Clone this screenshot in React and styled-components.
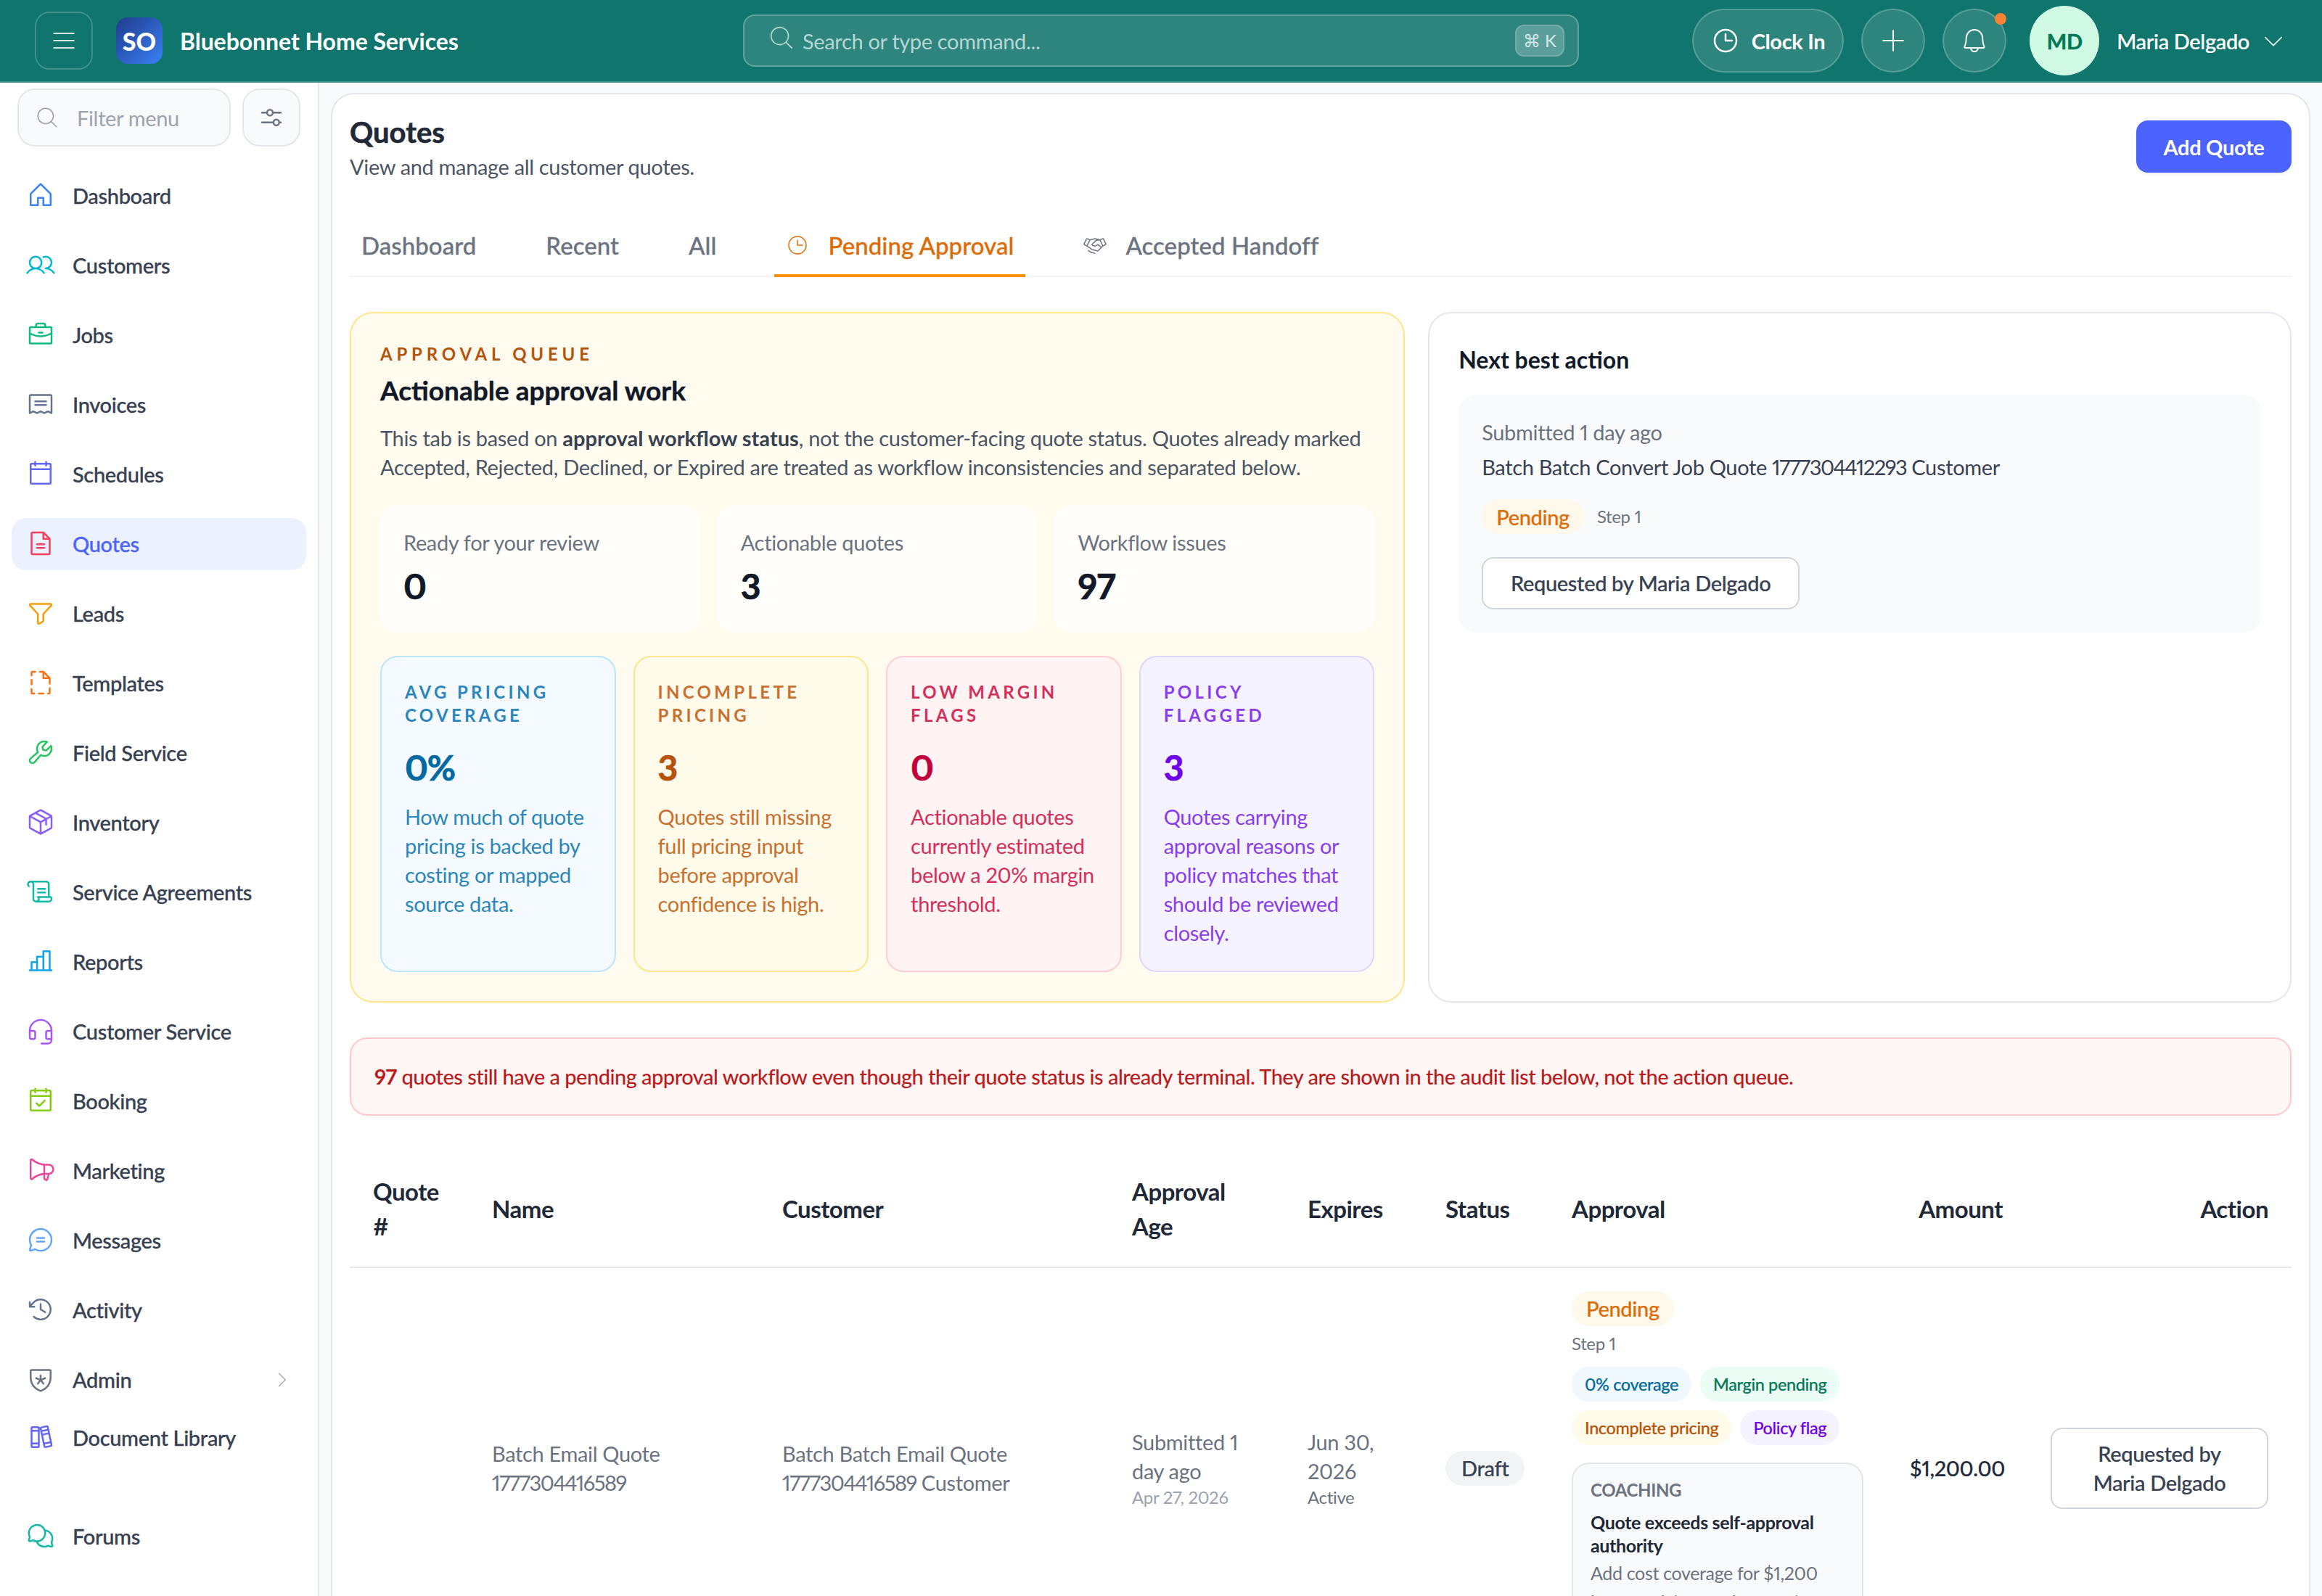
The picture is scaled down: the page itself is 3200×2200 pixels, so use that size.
import React from "react";
import styled, { createGlobalStyle } from "styled-components";
import {
  PiListLight, PiMagnifyingGlassLight, PiClock, PiClockLight, PiPlusLight, PiBellLight, PiCaretDownLight, PiCaretRightLight,
  PiHouse, PiUsers, PiBriefcase, PiReceipt, PiCalendarBlank, PiFileText, PiFunnel, PiFileDashed, PiWrench, PiPackage,
  PiScroll, PiChartBar, PiHeadset, PiCalendarCheck, PiMegaphone, PiChatCircleText, PiClockCounterClockwise, PiShieldStar,
  PiBooks, PiChatsCircle, PiHandshakeLight,
} from "react-icons/pi";

const Global = createGlobalStyle`
  html, body { margin: 0; padding: 0; background: #fff; }
  * { box-sizing: border-box; }
`;

const Shell = styled.div`
  zoom: 2;
  width: 1600px;
  height: 1100px;
  overflow: hidden;
  display: flex;
  flex-direction: column;
  font-family: "Lato", "Noto Sans", sans-serif;
  font-variant-numeric: proportional-nums;
  letter-spacing: -.17px;
  color: #374151;
  background: #f9fafb;
`;

const Header = styled.header`
  height: 57px;
  flex: none;
  display: flex;
  align-items: center;
  padding: 0 24.5px 0 24px;
  background: #10756d;
  border-bottom: 1px solid #3f9189;
  color: #fff;
`;
const MenuBtn = styled.div`
  width: 40px; height: 40px;
  border-radius: 10px;
  border: 1px solid rgba(255,255,255,.2);
  display: flex; align-items: center; justify-content: center;
  color: #d5e8e6; font-size: 20px;
`;
const Logo = styled.div`
  width: 32px; height: 32px; margin-left: 16px;
  border-radius: 8px;
  background: linear-gradient(135deg, #1e3a8a, #3b82f6);
  display: flex; align-items: center; justify-content: center;
  font-weight: 900; font-size: 17px; letter-spacing: 0;
`;
const Brand = styled.div`
  margin-left: 12px; width: 200px;
  font-size: 16px; font-weight: 700; white-space: nowrap; letter-spacing: -.03px;
`;
const SearchBox = styled.div`
  margin-left: 188px;
  width: 576px; height: 36px;
  border-radius: 8px;
  background: rgba(255,255,255,.12);
  border: 1px solid rgba(255,255,255,.25);
  display: flex; align-items: center;
  padding: 0 9px 0 16px; gap: 5px;
  color: #b5d6d3; font-size: 14.5px;
  svg { font-size: 19px; margin-top: -4px; }
`;
const SearchText = styled.span` flex: 1; `;
const Kbd = styled.span`
  width: 34px; height: 22px; border-radius: 6px;
  background: rgba(255,255,255,.22);
  border: 1px solid rgba(255,255,255,.15);
  display: flex; align-items: center; justify-content: center;
  font-size: 12px; color: #d6e8e6;
`;
const Actions = styled.div`
  margin-left: auto;
  display: flex; align-items: center;
`;
const Pill = styled.div`
  height: 44px; padding: 0 12px;
  border-radius: 22px;
  background: rgba(255,255,255,.12);
  border: 1px solid rgba(255,255,255,.2);
  display: flex; align-items: center; gap: 8px;
  font-size: 14.5px; font-weight: 700;
  svg { font-size: 20px; }
`;
const Round = styled.div`
  position: relative;
  width: 44px; height: 44px;
  margin-left: ${p => p.$ml}px;
  border-radius: 50%;
  background: rgba(255,255,255,.12);
  border: 1px solid rgba(255,255,255,.2);
  display: flex; align-items: center; justify-content: center;
  font-size: 20px;
`;
const Dot = styled.span`
  position: absolute; top: 2px; right: -1px;
  width: 8px; height: 8px; border-radius: 50%;
  background: #fb8232;
`;
const Avatar = styled.div`
  width: 48px; height: 48px; margin-left: 16px;
  border-radius: 50%;
  background: #d1fae5; color: #047857;
  display: flex; align-items: center; justify-content: center;
  font-weight: 700; font-size: 14.5px;
  -webkit-text-stroke: .25px currentColor;
`;
const UserName = styled.div`
  margin-left: 12px; font-size: 14.5px; font-weight: 500; white-space: nowrap;
  -webkit-text-stroke: .12px currentColor;
`;
const Caret = styled.span`
  margin-left: 7.5px; display: flex; font-size: 18px;
`;

const Body = styled.div`
  flex: 1; min-height: 0; display: flex;
`;
const Sidebar = styled.aside`
  width: 220px; flex: none;
  background: #fff;
  border-right: 1px solid #e5e7eb;
  padding: 4px 12px 0;
`;
const FilterRow = styled.div`
  display: flex; gap: 8px;
`;
const FilterInput = styled.div`
  flex: 1; height: 40px;
  border-radius: 12px;
  border: 1px solid #e5e7eb;
  background: #f9fafb;
  display: flex; align-items: center; gap: 12px;
  padding-left: 11px;
  color: #9ca3af; font-size: 14.5px;
  svg { font-size: 17px; }
`;
const FilterBtn = styled.div`
  width: 40px; height: 40px; flex: none;
  border-radius: 12px;
  border: 1px solid #e5e7eb;
  background: #f9fafb;
  display: flex; align-items: center; justify-content: center;
  color: #6b7280;
`;
const Nav = styled.nav`
  margin: 16px 0 0 -4px;
  display: flex; flex-direction: column; gap: 12px;
`;
const NavStack = styled.div`
  display: flex; flex-direction: column; gap: 4px;
`;
const NavItem = styled.div`
  height: 36px;
  margin-top: ${p => p.$top || 0}px;
  margin-right: -4px;
  padding: 0 10px;
  border-radius: 10px;
  display: flex; align-items: center; gap: 12px;
  font-size: 14.5px; font-weight: 500; white-space: nowrap;
  -webkit-text-stroke: .15px currentColor;
  color: ${p => (p.$active ? "#4c63ff" : "#374151")};
  background: ${p => (p.$active ? "#ebf1fe" : "transparent")};
  > svg:first-child { font-size: 20px; flex: none; margin-top: -1px; color: ${p => p.$icon}; }
`;
const NavLabel = styled.span` padding-bottom: 1px; `;
const NavCaret = styled.span`
  margin-left: auto; display: flex; font-size: 14px; color: #9ca3af;
`;

const Main = styled.main`
  flex: 1; min-width: 0; padding: 7px 8px 0 8px; overflow: hidden;
`;
const Card = styled.section`
  background: #fff;
  border: 1px solid #e5e7eb;
  border-radius: 16px 16px 0 0;
  padding: 12px 12px 0;
  min-height: 1040px;
`;
const TitleRow = styled.div`
  display: flex; align-items: center; justify-content: space-between;
`;
const Title = styled.h1`
  margin: 0; font-size: 20px; line-height: 28px; font-weight: 700; color: #1f2937; letter-spacing: 0;
  -webkit-text-stroke: .3px currentColor;
`;
const Sub = styled.p`
  margin: 0; font-size: 14.5px; line-height: 20px; color: #4b5563;
`;
const PrimaryBtn = styled.div`
  width: 107px; height: 36px; border-radius: 8px;
  background: #4c63ff; color: #fff;
  display: flex; align-items: center; justify-content: center;
  font-size: 14.5px; font-weight: 700;
  box-shadow: 0 1px 2px rgba(0,0,0,.08);
`;
const Tabs = styled.div`
  margin-top: 24px;
  display: flex; gap: 32px;
  height: 42px;
  border-bottom: 1px solid #f3f4f6;
`;
const Tab = styled.div`
  height: 42px; padding: 0 8px;
  display: flex; align-items: center; gap: 13px;
  border-bottom: 2px solid ${p => (p.$active ? "#f78f06" : "transparent")};
  font-size: 16.5px; font-weight: 500; white-space: nowrap; letter-spacing: .03px;
  -webkit-text-stroke: .15px currentColor;
  color: ${p => (p.$active ? "#dd6b06" : "#6b7280")};
  svg { font-size: 16px; }
`;

const Panels = styled.div`
  margin-top: 24px;
  display: grid; grid-template-columns: 11fr 9fr; gap: 16px;
`;
const Queue = styled.div`
  border: 1px solid #fde68a; border-radius: 16px;
  background: #fffbef;
  padding: 20px;
`;
const Eyebrow = styled.div`
  font-size: 12px; line-height: 16px; font-weight: 700;
  letter-spacing: 2.9px; color: #b45309;
`;
const Heading = styled.h2`
  margin: 3px 0 0; font-size: 18.5px; line-height: 28px; font-weight: 700; color: #111827; letter-spacing: 0;
  -webkit-text-stroke: .2px currentColor;
`;
const Para = styled.p`
  margin: 9px 0 0; font-size: 14.5px; line-height: 20px; color: #4b5563; letter-spacing: -.15px;
  b { font-weight: 700; color: #374151; letter-spacing: 0; }
`;
const Stats = styled.div`
  margin-top: 16px;
  display: grid; grid-template-columns: repeat(3, 1fr); gap: 12px;
`;
const Stat = styled.div`
  height: 88px; padding: 16px;
  border-radius: 12px;
  background: rgba(255,255,255,.75);
`;
const StatLabel = styled.div`
  font-size: 14.5px; line-height: 20px; color: #6b7280;
`;
const StatValue = styled.div`
  margin-top: 4px; font-size: 24px; line-height: 32px; font-weight: 700; color: #111827;
  -webkit-text-stroke: .35px currentColor;
`;
const Metrics = styled.div`
  margin-top: 16px;
  display: grid; grid-template-columns: repeat(4, 1fr); gap: 12px;
`;
const Metric = styled.div`
  padding: 16px; border-radius: 12px;
  border: 1px solid ${p => p.$line};
  background: ${p => p.$bg};
  color: ${p => p.$text};
`;
const MetricLabel = styled.div`
  font-size: 12px; line-height: 16px; font-weight: 700; letter-spacing: .18em;
`;
const MetricValue = styled.div`
  margin-top: 12px; font-size: 24px; line-height: 32px; font-weight: 700; letter-spacing: -.6px;
  -webkit-text-stroke: .35px currentColor;
  color: ${p => p.$color};
`;
const MetricDesc = styled.div`
  margin-top: 8px; font-size: 14.5px; line-height: 20px;
`;

const NextPanel = styled.div`
  border: 1px solid #e5e7eb; border-radius: 16px;
  background: #fff; padding: 20px;
`;
const NextTitle = styled.h3`
  margin: 0; font-size: 16px; line-height: 24px; font-weight: 700; color: #111827; letter-spacing: 0;
`;
const NextBox = styled.div`
  margin-top: 12px; padding: 16px; border-radius: 12px; background: #f9fafb;
`;
const Muted = styled.div`
  font-size: 14.5px; line-height: 20px; color: #6b7280;
`;
const Dark = styled.div`
  margin-top: 4px; font-size: 14.5px; line-height: 20px; color: #374151;
`;
const Digits = styled.span` letter-spacing: -.75px; `;
const BadgeRow = styled.div`
  margin-top: ${p => p.$mt}px; display: flex; align-items: center; gap: 9px;
`;
const Badge = styled.span`
  display: inline-flex; align-items: center; height: 24px; padding: 0 ${p => p.$pad || 10}px;
  border-radius: 12px; white-space: nowrap;
  font-size: ${p => p.$size || 14.5}px; font-weight: 500;
  -webkit-text-stroke: .1px currentColor;
  background: ${p => p.$bg}; color: ${p => p.$color};
`;
const Small = styled.div`
  margin-top: ${p => p.$mt || 0}px;
  font-size: 12px; line-height: 16px; color: ${p => p.$color || "#6b7280"};
`;
const OutlineBtn = styled.div`
  margin-top: ${p => p.$mt || 0}px;
  display: inline-flex; align-items: center; justify-content: center; text-align: center;
  padding: 0 ${p => p.$pad || 0}px;
  height: ${p => p.$h || 36}px; width: ${p => p.$w}px;
  border-radius: 8px; background: #fff; border: 1px solid #d1d5db;
  font-size: 14.5px; line-height: 20px; font-weight: 500; color: #374151;
  -webkit-text-stroke: .12px currentColor;
`;
const Warning = styled.div`
  margin-top: 24px; padding: 16px;
  border: 1px solid #fecaca; border-radius: 12px;
  background: #fef5f5;
  font-size: 14.5px; line-height: 20px; font-weight: 500; color: #b91c1c; letter-spacing: -.26px;
`;

const Table = styled.table`
  margin-top: 24px; width: 100%;
  table-layout: fixed; border-collapse: collapse;
`;
const Col = styled.col`
  width: ${p => p.$w}px;
`;
const Th = styled.th`
  padding: 16px;
  font-size: 16.5px; line-height: 24px; font-weight: 700; color: #1f2937; letter-spacing: -.25px;
  text-align: ${p => p.$align || "left"};
  border-bottom: 1px solid #e5e7eb;
  vertical-align: middle;
`;
const Row = styled.tr` height: 276px; `;
const Td = styled.td`
  padding: 16px;
  font-size: 14.5px; line-height: 20px; color: #6b7280;
  text-align: ${p => p.$align || "left"};
  vertical-align: middle;
`;
const Amount = styled.span` color: #1f2937; font-weight: 500; -webkit-text-stroke: .12px currentColor; `;
const Tags = styled.div`
  margin-top: 8px; display: flex; flex-wrap: wrap; gap: 6px;
`;
const Coaching = styled.div`
  margin-top: 12px; padding: 10px 12px 0; height: 126px; overflow: hidden;
  border: 1px solid #e5e7eb; border-radius: 12px; background: #f9fafb;
`;
const CoachLabel = styled.div`
  font-size: 12px; line-height: 16px; font-weight: 700; color: #6b7280;
`;
const CoachTitle = styled.div`
  margin-top: 6px; font-size: 12.5px; line-height: 16px; font-weight: 700; color: #1f2937;
`;
const CoachText = styled.div`
  margin-top: 1px; font-size: 12.5px; line-height: 20px; color: #6b7280;
`;

const SlidersIcon = () => (
  <svg width="16" height="16" viewBox="0 0 16 16" fill="none" stroke="currentColor" strokeWidth="1.2" strokeLinecap="round">
    <path d="M1.5 4.6h3.6M9 4.6h5.5M1.5 11.4h8M13.4 11.4h1.1" />
    <circle cx="7" cy="4.6" r="2" />
    <circle cx="11.4" cy="11.4" r="2" />
  </svg>
);

const nav = [
  ["Dashboard", PiHouse, "#3b82f6"], ["Customers", PiUsers, "#06b6d4"], ["Jobs", PiBriefcase, "#10b981"],
  ["Invoices", PiReceipt, "#64748b"], ["Schedules", PiCalendarBlank, "#6366f1"], ["Quotes", PiFileText, "#f43f5e"],
  ["Leads", PiFunnel, "#f59e0b"], ["Templates", PiFileDashed, "#f97316"], ["Field Service", PiWrench, "#22c55e"],
  ["Inventory", PiPackage, "#8b5cf6"], ["Service Agreements", PiScroll, "#14b8a6"], ["Reports", PiChartBar, "#0ea5e9"],
  ["Customer Service", PiHeadset, "#a855f7"], ["Booking", PiCalendarCheck, "#84cc16"], ["Marketing", PiMegaphone, "#ec4899"],
  ["Messages", PiChatCircleText, "#60a5fa"], ["Activity", PiClockCounterClockwise, "#64748b"],
];

const metrics = [
  { label: "AVG PRICING COVERAGE", value: "0%", desc: "How much of quote pricing is backed by costing or mapped source data.", line: "#bae6fd", bg: "#f4faff", text: "#2b86bb", color: "#0369a1" },
  { label: "INCOMPLETE PRICING", value: "3", desc: "Quotes still missing full pricing input before approval confidence is high.", line: "#fde68a", bg: "#fffbeb", text: "#c8702f", color: "#b45309" },
  { label: "LOW MARGIN FLAGS", value: "0", desc: "Actionable quotes currently estimated below a 20% margin threshold.", line: "#fecdd3", bg: "#fff4f3", text: "#d42f5a", color: "#c0003c" },
  { label: "POLICY FLAGGED", value: "3", desc: "Quotes carrying approval reasons or policy matches that should be reviewed closely.", line: "#ddd6fe", bg: "#f5f3ff", text: "#8a3ded", color: "#6d00e8" },
];

const cols = [82, 200, 241, 121, 95, 87, 233, 96, 183];
const heads = [["Quote #"], ["Name"], ["Customer"], ["Approval Age"], ["Expires"], ["Status"], ["Approval"], ["Amount", "right"], ["Action", "right"]];

function NavRow({ label, icon: Icon, color, active, top, children }) {
  return (
    <NavItem $icon={color} $active={active} $top={top}>
      <Icon />
      <NavLabel>{label}</NavLabel>
      {children}
    </NavItem>
  );
}

export default function App() {
  return (
    <Shell>
      <Global />
      <Header>
        <MenuBtn><PiListLight /></MenuBtn>
        <Logo>SO</Logo>
        <Brand>Bluebonnet Home Services</Brand>
        <SearchBox>
          <PiMagnifyingGlassLight />
          <SearchText>Search or type command...</SearchText>
          <Kbd>⌘ K</Kbd>
        </SearchBox>
        <Actions>
          <Pill><PiClock />Clock In</Pill>
          <Round $ml={12}><PiPlusLight /></Round>
          <Round $ml={12}><PiBellLight /><Dot /></Round>
          <Avatar>MD</Avatar>
          <UserName>Maria Delgado</UserName>
          <Caret><PiCaretDownLight /></Caret>
        </Actions>
      </Header>
      <Body>
        <Sidebar>
          <FilterRow>
            <FilterInput><PiMagnifyingGlassLight />Filter menu</FilterInput>
            <FilterBtn><SlidersIcon /></FilterBtn>
          </FilterRow>
          <Nav>
            {nav.map(([label, icon, color]) => (
              <NavRow key={label} label={label} icon={icon} color={color} active={label === "Quotes"} />
            ))}
            <NavStack>
              <NavRow label="Admin" icon={PiShieldStar} color="#6b7280">
                <NavCaret><PiCaretRightLight /></NavCaret>
              </NavRow>
              <NavRow label="Document Library" icon={PiBooks} color="#6366f1" />
            </NavStack>
            <NavRow label="Forums" icon={PiChatsCircle} color="#14b8a6" top={20} />
          </Nav>
        </Sidebar>
        <Main>
          <Card>
            <TitleRow>
              <div>
                <Title>Quotes</Title>
                <Sub>View and manage all customer quotes.</Sub>
              </div>
              <PrimaryBtn>Add Quote</PrimaryBtn>
            </TitleRow>
            <Tabs>
              <Tab>Dashboard</Tab>
              <Tab>Recent</Tab>
              <Tab>All</Tab>
              <Tab $active><PiClockLight />Pending Approval</Tab>
              <Tab><PiHandshakeLight />Accepted Handoff</Tab>
            </Tabs>
            <Panels>
              <Queue>
                <Eyebrow>APPROVAL QUEUE</Eyebrow>
                <Heading>Actionable approval work</Heading>
                <Para>
                  This tab is based on <b>approval workflow status</b>, not the customer-facing quote status. Quotes already marked Accepted, Rejected, Declined, or Expired are treated as workflow inconsistencies and separated below.
                </Para>
                <Stats>
                  <Stat><StatLabel>Ready for your review</StatLabel><StatValue>0</StatValue></Stat>
                  <Stat><StatLabel>Actionable quotes</StatLabel><StatValue>3</StatValue></Stat>
                  <Stat><StatLabel>Workflow issues</StatLabel><StatValue>97</StatValue></Stat>
                </Stats>
                <Metrics>
                  {metrics.map(m => (
                    <Metric key={m.label} $line={m.line} $bg={m.bg} $text={m.text}>
                      <MetricLabel>{m.label}</MetricLabel>
                      <MetricValue $color={m.color}>{m.value}</MetricValue>
                      <MetricDesc>{m.desc}</MetricDesc>
                    </Metric>
                  ))}
                </Metrics>
              </Queue>
              <NextPanel>
                <NextTitle>Next best action</NextTitle>
                <NextBox>
                  <Muted>Submitted 1 day ago</Muted>
                  <Dark>Batch Batch Convert Job Quote <Digits>1777304412293</Digits> Customer</Dark>
                  <BadgeRow $mt={12}>
                    <Badge $bg="#fff9ec" $color="#dd6b06">Pending</Badge>
                    <Small>Step 1</Small>
                  </BadgeRow>
                  <OutlineBtn $w={219} $mt={16}>Requested by Maria Delgado</OutlineBtn>
                </NextBox>
              </NextPanel>
            </Panels>
            <Warning>
              <b>97</b> quotes still have a pending approval workflow even though their quote status is already terminal. They are shown in the audit list below, not the action queue.
            </Warning>
            <Table>
              <colgroup>{cols.map((w, i) => <Col key={i} $w={w} />)}</colgroup>
              <thead>
                <tr>{heads.map(([h, a]) => <Th key={h} $align={a}>{h}</Th>)}</tr>
              </thead>
              <tbody>
                <Row>
                  <Td />
                  <Td>Batch Email Quote <Digits>1777304416589</Digits></Td>
                  <Td>Batch Batch Email Quote <Digits>1777304416589</Digits> Customer</Td>
                  <Td>Submitted 1 day ago<Small $color="#9ca3af">Apr 27, 2026</Small></Td>
                  <Td>Jun 30, 2026<Small>Active</Small></Td>
                  <Td><Badge $pad={11} $bg="#f3f4f6" $color="#374151">Draft</Badge></Td>
                  <Td>
                    <BadgeRow $mt={0}><Badge $bg="#fff9ec" $color="#dd6b06">Pending</Badge></BadgeRow>
                    <Small $mt={4}>Step 1</Small>
                    <Tags>
                      <Badge $size={11.7} $pad={9} $bg="#f0f9ff" $color="#0369a1">0% coverage</Badge>
                      <Badge $size={11.7} $pad={9} $bg="#ecfdf5" $color="#047857">Margin pending</Badge>
                      <Badge $size={11.7} $pad={9} $bg="#fffbeb" $color="#b45309">Incomplete pricing</Badge>
                      <Badge $size={11.7} $pad={9} $bg="#f5f3ff" $color="#6d00e8">Policy flag</Badge>
                    </Tags>
                    <Coaching>
                      <CoachLabel>COACHING</CoachLabel>
                      <CoachTitle>Quote exceeds self-approval authority</CoachTitle>
                      <CoachText>Add cost coverage for $1,200 before relying on the margin estimate.</CoachText>
                    </Coaching>
                  </Td>
                  <Td $align="right"><Amount>$1,200.00</Amount></Td>
                  <Td $align="right"><OutlineBtn $w={150} $h={56} $pad={20}>Requested by Maria Delgado</OutlineBtn></Td>
                </Row>
              </tbody>
            </Table>
          </Card>
        </Main>
      </Body>
    </Shell>
  );
}
